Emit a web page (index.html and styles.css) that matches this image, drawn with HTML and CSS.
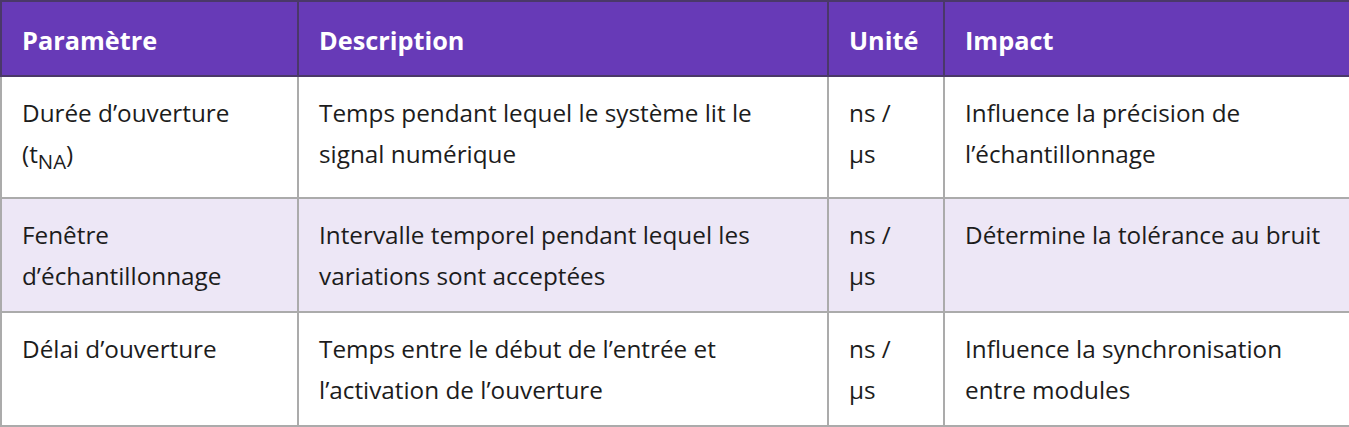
FILE: index.html
```html
<!DOCTYPE html>
<html lang="fr">
<head>
<meta charset="utf-8">
<title>Paramètres</title>
<link rel="stylesheet" href="styles.css">
</head>
<body>
<table class="params">
  <colgroup>
    <col class="c-param">
    <col class="c-desc">
    <col class="c-unit">
    <col class="c-impact">
  </colgroup>
  <thead>
    <tr>
      <th>Paramètre</th>
      <th>Description</th>
      <th>Unité</th>
      <th>Impact</th>
    </tr>
  </thead>
  <tbody>
    <tr>
      <td>Durée d’ouverture (t<sub>NA</sub>)</td>
      <td>Temps pendant lequel le système lit le signal numérique</td>
      <td>ns / µs</td>
      <td>Influence la précision de l’échantillonnage</td>
    </tr>
    <tr class="alt">
      <td>Fenêtre d’échantillonnage</td>
      <td>Intervalle temporel pendant lequel les variations sont acceptées</td>
      <td>ns / µs</td>
      <td>Détermine la tolérance au bruit</td>
    </tr>
    <tr>
      <td>Délai d’ouverture</td>
      <td>Temps entre le début de l’entrée et l’activation de l’ouverture</td>
      <td>ns / µs</td>
      <td>Influence la synchronisation entre modules</td>
    </tr>
  </tbody>
</table>
</body>
</html>
```
FILE: styles.css
```css
html, body {
  margin: 0;
  padding: 0;
  background: #ffffff;
}

body {
  font-family: "Open Sans", "Noto Sans", "Liberation Sans", sans-serif;
  font-size: 24.3px;
  color: #1c1c1c;
}

.params {
  width: 1349px;
  border-collapse: collapse;
  table-layout: fixed;
}

.c-param { width: 297px; }
.c-desc { width: 530px; }
.c-unit { width: 116px; }
.c-impact { width: 406px; }

.params th,
.params td {
  text-align: left;
  vertical-align: top;
  line-height: 41px;
}

.params th {
  padding: 18px 20px 14px 20px;
  font-size: 25.3px;
  background: #673ab7;
  color: #ffffff;
  font-weight: 700;
  border: 2px solid #4a3869;
}

.params td {
  padding: 15px 20px 15px 20px;
  border: 2px solid #ababab;
}

.params tr.alt td {
  background: #ede7f6;
}

.params sub {
  font-size: 0.84em;
}
```
